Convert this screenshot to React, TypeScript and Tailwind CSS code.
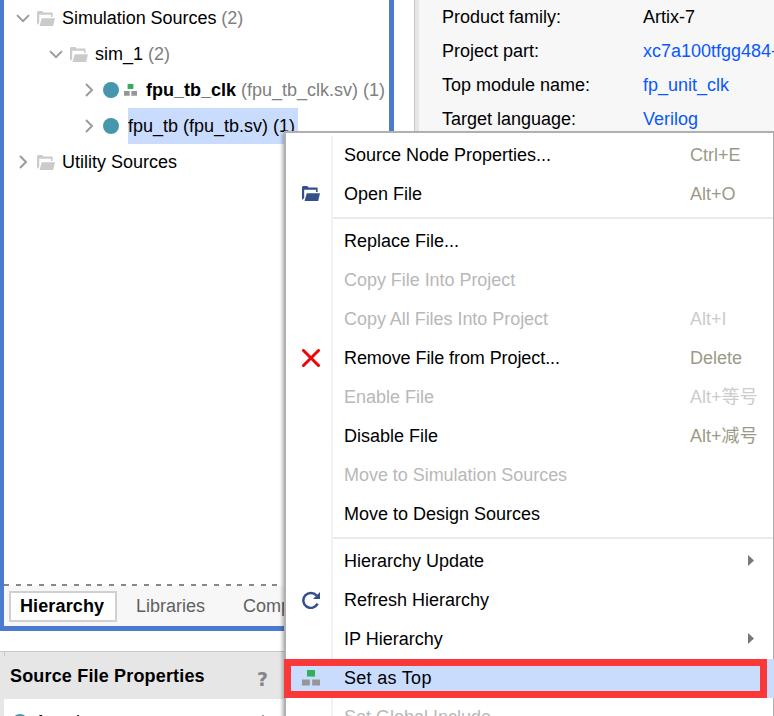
import React from "react";

function Chevron({ open = false }: { open?: boolean }) {
  return (
    <svg width="14" height="14" viewBox="0 0 14 14" fill="none" stroke="#999" strokeWidth="1.9" className="shrink-0">
      <path d={open ? "M1 4.2 7 10.2 13 4.2" : "M4 1 10 7 4 13"} />
    </svg>
  );
}

function Folder({ color, className = "" }: { color: string; className?: string }) {
  return (
    <svg width="18" height="15" viewBox="0 0 18 15" fill={color} className={`shrink-0 ${className}`}>
      <path d="M0 1 1 0H5.2L6.6 1.6H15.6V6H14V3.8H2.2V12L0 14Z" />
      <path d="M4.8 7.2H18L16.2 15H2.5Z" />
    </svg>
  );
}

function Blocks({ small = false }: { small?: boolean }) {
  return (
    <svg width={small ? 13 : 18} height={small ? 12 : 16} viewBox="0 0 18 16" preserveAspectRatio="none" className="shrink-0">
      <path fill="#34ae5b" d="M5 0h8v6.6H5z" />
      <path fill="#969696" d="M0 9.4h7.8v6.2H0zM10.2 9.4H18v6.2h-7.8z" />
    </svg>
  );
}

type Item = {
  label: string;
  keys?: string;
  off?: boolean;
  icon?: React.ReactNode;
  sub?: boolean;
  active?: boolean;
  spacing?: string;
};

const groups: Item[][] = [
  [
    { label: "Source Node Properties...", keys: "Ctrl+E" },
    { label: "Open File", keys: "Alt+O", icon: <Folder color="#34508a" /> },
  ],
  [
    { label: "Replace File..." },
    { label: "Copy File Into Project", off: true, spacing: "tracking-[-0.04px]" },
    { label: "Copy All Files Into Project", keys: "Alt+I", off: true, spacing: "tracking-[-0.04px]" },
    {
      label: "Remove File from Project...",
      keys: "Delete",
      spacing: "tracking-[-0.08px]",
      icon: (
        <svg width="18" height="18" viewBox="0 0 18 18" stroke="#ee0505" strokeWidth="3" strokeLinecap="round">
          <path d="M1.5 1.5 16.5 16.5M16.5 1.5 1.5 16.5" />
        </svg>
      ),
    },
    { label: "Enable File", keys: "Alt+等号", off: true },
    { label: "Disable File", keys: "Alt+减号" },
    { label: "Move to Simulation Sources", off: true, spacing: "tracking-[-0.04px]" },
    { label: "Move to Design Sources" },
  ],
  [
    { label: "Hierarchy Update", sub: true },
    {
      label: "Refresh Hierarchy",
      icon: (
        <svg width="18" height="18" viewBox="0 0 18 18" fill="none">
          <path d="M14.6 4.6A7.5 7.5 0 1 0 15.6 12.6" stroke="#34508a" strokeWidth="2.5" />
          <path d="M18 1V8H11Z" fill="#34508a" />
        </svg>
      ),
    },
    { label: "IP Hierarchy", sub: true },
    { label: "Set as Top", icon: <Blocks />, active: true, spacing: "tracking-[0.3px]" },
    { label: "Set Global Include", off: true },
  ],
];

function MenuRow({ item }: { item: Item }) {
  return (
    <div className={`flex h-[39px] items-center ${item.active ? "relative -mr-px bg-[#c9dcfe]" : ""}`}>
      <div className={`flex h-full w-[47px] shrink-0 items-center justify-center border-r-2 pb-[2px] pl-[5px] ${item.active ? "border-transparent" : "border-[#f2f2f2]"}`}>
        {item.icon}
      </div>
      <span className={`w-[357px] shrink-0 pb-[2px] pl-[11px] ${item.spacing ?? ""} ${item.off ? "text-[#b8b8b8]" : "text-black"}`}>{item.label}</span>
      <span className={`pb-[2px] ${item.off ? "text-[#cccccc]" : "text-[#9b9a88]"}`}>{item.keys}</span>
      {item.sub && (
        <svg width="6" height="11" viewBox="0 0 6 11" className="mb-[2px] ml-auto mr-[19px]">
          <path d="M0 0 6 5.5 0 11Z" fill="#777" />
        </svg>
      )}
      {item.active && <div className="absolute inset-y-0 -left-[2px] right-[7px] border-[7px] border-[#fb3838]" />}
    </div>
  );
}

function ContextMenu() {
  return (
    <div className="absolute left-[284px] top-[131px] h-[620px] w-[490px] border-l-2 border-r border-t-2 border-[#b0b0b0] bg-white pt-[3px] shadow-[-2px_2px_3px_rgba(0,0,0,0.25)]">
      {groups.map((g, i) => (
        <React.Fragment key={i}>
          {i > 0 && (
            <div className="flex h-2">
              <div className="w-[47px] border-r-2 border-[#f2f2f2]" />
              <div className="mt-[3px] h-[2px] flex-1 bg-[#ebebeb]" />
            </div>
          )}
          {g.map((item) => (
            <MenuRow key={item.label} item={item} />
          ))}
        </React.Fragment>
      ))}
    </div>
  );
}

function Dot() {
  return <span className="size-4 shrink-0 rounded-full bg-[#4896ae]" />;
}

function Sources() {
  return (
    <section className="flex h-[631px] w-[394px] shrink-0 flex-col border-b-[5px] border-l-4 border-r-[5px] border-[#4a7bcf] bg-white">
      <div className="flex-1">
        <div className="flex h-9 items-center pl-3">
          <Chevron open />
          <Folder color="#cbcbcb" className="ml-[7px] mr-[7px]" />
          <span className="tracking-[-0.04px]">Simulation Sources <span className="text-[#808080]">(2)</span></span>
        </div>
        <div className="flex h-9 items-center pl-[45px]">
          <Chevron open />
          <Folder color="#cbcbcb" className="ml-[7px] mr-[7px]" />
          <span>sim_1 <span className="text-[#808080]">(2)</span></span>
        </div>
        <div className="flex h-9 items-center pl-[78px]">
          <Chevron />
          <span className="ml-[7px] mr-[5px] flex"><Dot /></span>
          <Blocks small />
          <span className="ml-[9px] text-[#808080]"><b className="text-black">fpu_tb_clk</b> (fpu_tb_clk.sv) (1)</span>
        </div>
        <div className="flex h-9 items-center pl-[78px]">
          <Chevron />
          <span className="ml-[7px] mr-[9px] flex"><Dot /></span>
          <span className="flex h-9 w-[170px] items-center bg-[#c9dcfe]">fpu_tb (fpu_tb.sv) (1)</span>
        </div>
        <div className="flex h-9 items-center pl-3">
          <Chevron />
          <Folder color="#cbcbcb" className="ml-[7px] mr-[7px]" />
          <span>Utility Sources</span>
        </div>
      </div>
      <div className="h-[2px] bg-[repeating-linear-gradient(90deg,#888_0_5px,#fff_5px_11.67px)]" />
      <div className="flex h-10 items-center bg-[#f7f7f7] pl-[5px] text-[#606060]">
        <div className="flex h-[31px] w-[108px] items-center border-2 border-[#d0d0d0] bg-white pl-[9px] font-bold tracking-[0.12px] text-black">Hierarchy</div>
        <span className="ml-[19px] w-[107px]">Libraries</span>
        <span>Compile Order</span>
      </div>
    </section>
  );
}

const facts: [string, string, string][] = [
  ["Product family:", "Artix-7", "text-black"],
  ["Project part:", "xc7a100tfgg484-", "text-[#0a58ff]"],
  ["Top module name:", "fp_unit_clk", "text-[#0a58ff]"],
  ["Target language:", "Verilog", "text-[#0a58ff]"],
];

export default function App() {
  return (
    <main className="relative flex h-[716px] w-[774px] overflow-hidden whitespace-nowrap bg-white font-['Liberation_Sans','Noto_Sans_CJK_SC',sans-serif] text-[18px] leading-5 text-black">
      <div className="flex w-[394px] shrink-0 flex-col">
        <Sources />
        <section className="mt-5 flex-1 border-t border-[#c8c8c8] bg-white">
          <header className="flex h-[47px] items-center bg-[#e6e6e6] font-bold">
            <span className="ml-1 h-1 w-px self-start bg-[#c8c8c8]" />
            <span className="ml-[5px] w-[247px] tracking-[0.17px]">Source File Properties</span>
            <span className="mt-[7px] font-['DejaVu_Sans'] text-[19px] text-[#858585]">?</span>
          </header>
          <div className="flex h-[17px] overflow-hidden border-l-4 border-[#e6e6e6] pl-2 pt-[13px]">
            <span className="mt-[2px] flex"><Dot /></span>
            <span className="ml-[9px]">function</span>
            <span className="ml-[162px] mt-[3px] h-1 w-[2px] bg-[#999]" />
          </div>
        </section>
      </div>
      <aside className="ml-5 flex-1 border-l border-[#c8c8c8] bg-[#e6e6e6] pl-1">
        <div className="h-full bg-[#f7f7f7] pl-[23px]">
          {facts.map(([name, value, tone]) => (
            <div key={name} className="flex h-[34px] items-center">
              <span className="w-[201px] shrink-0">{name}</span>
              <span className={tone}>{value}</span>
            </div>
          ))}
        </div>
      </aside>
      <ContextMenu />
    </main>
  );
}
